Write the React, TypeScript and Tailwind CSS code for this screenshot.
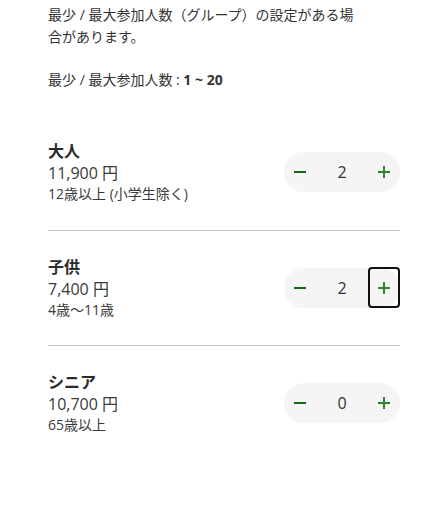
import React from "react";

type Item = { title: string; price: string; note: string; count: number; focused?: boolean };

const items: Item[] = [
  { title: "大人", price: "11,900 円", note: "12歳以上 (小学生除く)", count: 2 },
  { title: "子供", price: "7,400 円", note: "4歳〜11歳", count: 2, focused: true },
  { title: "シニア", price: "10,700 円", note: "65歳以上", count: 0 },
];

function Minus() {
  return (
    <svg width="14" height="14" viewBox="0 0 14 14">
      <rect x="1" y="6" width="12" height="2" fill="#0f6b12" />
    </svg>
  );
}

function Plus() {
  return (
    <svg width="14" height="14" viewBox="0 0 14 14">
      <rect x="1" y="6" width="12" height="2" fill="#2a882c" />
      <rect x="6" y="1" width="2" height="12" fill="#2a882c" />
    </svg>
  );
}

function Stepper({ count, focused }: { count: number; focused?: boolean }) {
  return (
    <div className="flex h-10 w-[116px] items-center justify-between rounded-full bg-[#f5f5f5]">
      <button className="flex h-10 w-8 items-center justify-center">
        <Minus />
      </button>
      <span className="text-[16px] leading-[22px] text-[#333]">{count}</span>
      <button
        className={
          focused
            ? "flex h-[41px] w-[32px] items-center justify-center rounded-[4px] border-2 border-[#111]"
            : "flex h-10 w-8 items-center justify-center"
        }
      >
        <Plus />
      </button>
    </div>
  );
}

export default function App() {
  return (
    <div className="min-h-[517px] w-[445px] bg-white font-['Open_Sans','Noto_Sans_CJK_JP',sans-serif] text-[#333]">
      <div className="w-[400px] pl-12 pt-[4px]">
        <p className="w-[316px] text-[14px] leading-[22px]">
          最少 / 最大参加人数（グループ）の設定がある場合があります。
        </p>
        <p className="mt-[21px] text-[14px] leading-[22px]">
          最少 / 最大参加人数 : <span className="font-bold">1 ~ 20</span>
        </p>
        <div className="mt-6">
          {items.map((it, i) => (
            <div
              key={it.title}
              className={
                i < items.length - 1
                  ? "flex items-center justify-between border-b border-[#c8c8c8] pt-[25px] pb-[25.5px]"
                  : "flex items-center justify-between pt-[25px] pb-[25.5px]"
              }
            >
              <div className="flex flex-col">
                <span className="text-[16px] font-bold leading-[22px] text-[#2b2b2b]">{it.title}</span>
                <span className="text-[16px] leading-[22px] text-[#3a3a3a]">{it.price}</span>
                <span className="text-[14px] leading-[20px] text-[#3a3a3a]">{it.note}</span>
              </div>
              <Stepper count={it.count} focused={it.focused} />
            </div>
          ))}
        </div>
      </div>
    </div>
  );
}
